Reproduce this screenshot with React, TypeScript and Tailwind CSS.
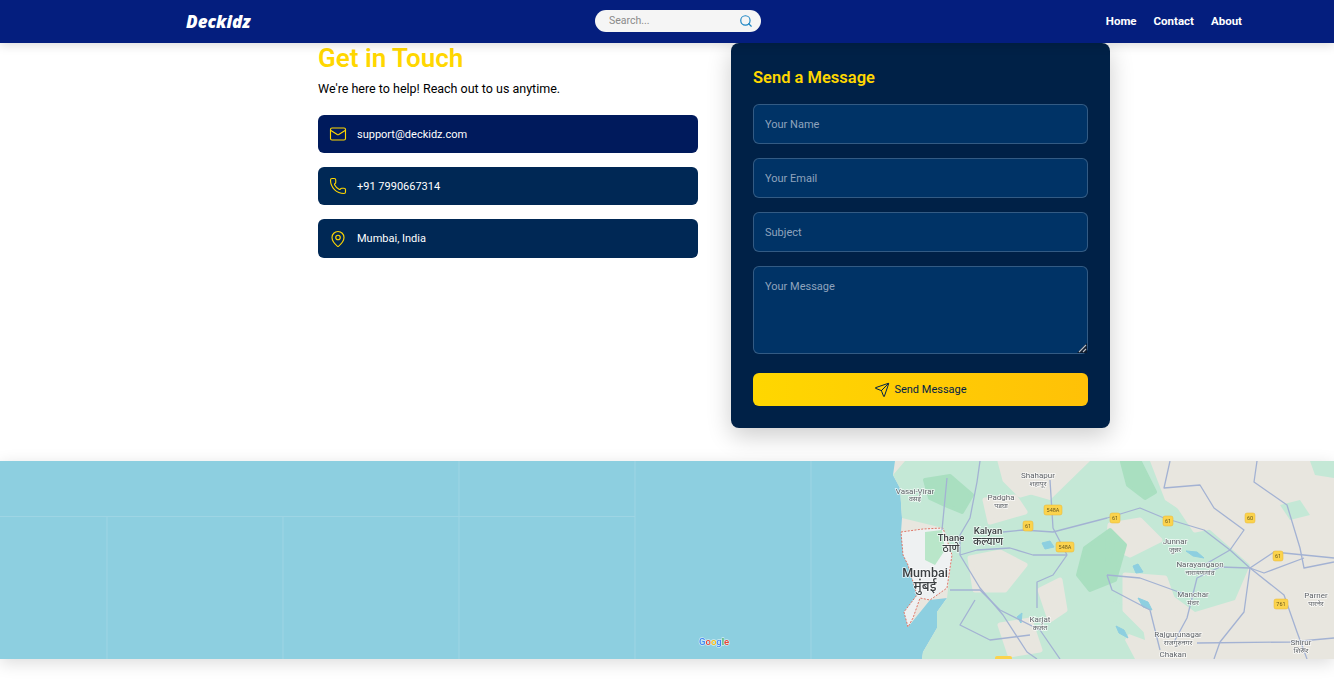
import React from "react";
import { Mail, MapPin, Phone, Search, Send } from "lucide-react";

const font = { fontFamily: 'Roboto, "Noto Sans", sans-serif' };

const gridLines = [107, 283, 459, 635, 811];

// the map is drawn in page coordinates, so the viewBox starts at y=461
const greens = [
  "893,475 905,461 1000,461 1015,490 1050,500 1090,461 1150,461 1165,500 1210,530 1250,565 1235,600 1195,612 1165,590 1150,600 1125,640 1135,659 922,659 923,652 937,628 937,612 947,598 952,555 943,528 902,518 900,488",
  "1280,505 1300,500 1310,515 1290,520",
  "1310,461 1334,461 1334,478 1315,475",
  "1110,600 1140,610 1145,640 1118,630",
];

const beiges = [
  "1000,461 1015,461 1060,461 1055,485 1020,495 1005,480",
  "985,500 1015,497 1025,512 990,522",
  "970,558 1000,552 1025,565 1005,590 975,590",
  "1040,590 1060,580 1065,610 1050,620",
  "1110,525 1140,520 1160,540 1130,555 1108,545",
  "1175,500 1205,500 1220,525 1195,530",
  "1000,625 1030,620 1040,650 1010,655",
  "1125,575 1165,578 1180,620 1155,640 1125,610",
];

const darkGreens = [
  "925,480 950,476 972,495 962,512 945,505 930,498",
  "1085,548 1110,530 1125,545 1115,580 1090,590 1078,575",
  "1122,462 1140,462 1155,492 1145,498 1128,485",
  "1107,535 1113,545 1108,565",
];

const lakes = [
  "1042,543 1050,541 1054,547 1045,549",
  "1186,551 1197,552 1204,558 1193,556",
  "1133,566 1138,564 1143,572 1136,573",
  "1138,598 1148,602 1152,610 1143,607",
  "1116,626 1124,630 1128,638 1119,633",
  "1017,617 1022,613 1021,623",
];

const roads = [
  "980,461 977,482 970,518 960,535 960,555 980,588 1003,615 1027,652 1037,659",
  "1003,532 1023,530 1053,532 1107,518 1140,508 1164,518 1204,530 1230,550 1250,568 1284,595 1297,632 1307,659",
  "960,555 977,550 1010,548 1033,555 1067,555",
  "1050,480 1053,528 1067,555 1053,575 1037,582 1037,608",
  "1257,461 1254,482 1287,505 1300,548 1304,568 1334,562",
  "1170,461 1164,488 1200,485 1214,508 1244,530 1230,550 1204,565",
  "1250,568 1274,552 1334,558",
  "1250,568 1264,573 1304,558",
  "1250,568 1220,567 1197,578 1187,618 1174,642",
  "1107,575 1140,578 1187,595",
  "1250,568 1244,612 1220,642 1214,659",
  "1197,643 1290,642 1334,638",
  "950,590 980,590 1000,610 1040,630 1060,659",
  "975,600 960,625 990,640 1030,635",
  "947,478 942,530",
  "1107,575 1112,590 1150,610 1160,650",
];

const shields = [
  { x: 1044, y: 505, w: 18, label: "548A" },
  { x: 1023, y: 521, w: 10, label: "61" },
  { x: 1056, y: 542, w: 18, label: "548A" },
  { x: 1110, y: 513, w: 10, label: "61" },
  { x: 1163, y: 516, w: 10, label: "61" },
  { x: 1245, y: 513, w: 10, label: "60" },
  { x: 1273, y: 551, w: 10, label: "61" },
  { x: 1274, y: 599, w: 14, label: "761" },
];

const labels = [
  { x: 915, y: 494, size: 8, text: "Vasai-Virar" },
  { x: 915, y: 501, size: 7, text: "वसई" },
  { x: 1038, y: 478, size: 8, text: "Shahapur" },
  { x: 1038, y: 486, size: 7, text: "शहापूर" },
  { x: 1001, y: 500, size: 8, text: "Padgha" },
  { x: 1001, y: 508, size: 7, text: "पडघा" },
  { x: 1040, y: 622, size: 8, text: "Karjat" },
  { x: 1040, y: 630, size: 7, text: "कर्जत" },
  { x: 1175, y: 544, size: 8, text: "Junnar" },
  { x: 1175, y: 552, size: 7, text: "जुन्नर" },
  { x: 1200, y: 567, size: 8, text: "Narayangaon" },
  { x: 1200, y: 575, size: 7, text: "नारायणगांव" },
  { x: 1193, y: 597, size: 8, text: "Manchar" },
  { x: 1193, y: 605, size: 7, text: "मंचर" },
  { x: 1178, y: 637, size: 8, text: "Rajgurunagar" },
  { x: 1178, y: 645, size: 7, text: "राजगुरुनगर" },
  { x: 1173, y: 657, size: 8, text: "Chakan" },
  { x: 1316, y: 598, size: 8, text: "Parner" },
  { x: 1316, y: 606, size: 7, text: "पारनेर" },
  { x: 1301, y: 645, size: 8, text: "Shirur" },
  { x: 1301, y: 653, size: 7, text: "शिरूर" },
  { x: 951, y: 541, size: 9.5, weight: 500, text: "Thane" },
  { x: 951, y: 552, size: 10.5, weight: 500, text: "ठाणे" },
  { x: 988, y: 534, size: 9.5, weight: 500, text: "Kalyan" },
  { x: 988, y: 545, size: 10.5, weight: 500, text: "कल्याण" },
  { x: 925, y: 577, size: 12.5, weight: 500, text: "Mumbai" },
  { x: 925, y: 591, size: 13.5, weight: 500, text: "मुंबई" },
];

function MapView() {
  return (
    <svg viewBox="0 461 1334 198" className="block h-[198px] w-full blur-[0.5px]">
      <rect x="0" y="461" width="1334" height="198" fill="#8dcfe0" />
      {gridLines.map((x) => (
        <line
          key={x}
          x1={x}
          x2={x}
          y1={x > 460 ? 461 : 516}
          y2="659"
          stroke="#9ed5e4"
          strokeWidth="1"
        />
      ))}
      <line x1="0" x2="635" y1="516.5" y2="516.5" stroke="#9ed5e4" />
      <line x1="459" x2="459" y1="461" y2="516" stroke="#9ed5e4" />

      <polygon
        points="895,461 1334,461 1334,659 922,659 923,652 937,628 937,612 947,598 930,600 908,627 904,612 917,595 908,565 901,532 902,518 900,488 893,475"
        fill="#e8e6df"
      />
      {greens.map((p) => (
        <polygon key={p} points={p} fill="#c4e8d6" />
      ))}
      {beiges.map((p) => (
        <polygon key={p} points={p} fill="#e8e6df" stroke="#e8e6df" strokeWidth="5" strokeLinejoin="round" />
      ))}
      {darkGreens.map((p) => (
        <polygon key={p} points={p} fill="#a9dfc0" stroke="#a9dfc0" strokeWidth="4" strokeLinejoin="round" />
      ))}
      {lakes.map((p) => (
        <polygon key={p} points={p} fill="#8dcfe0" stroke="#8dcfe0" strokeWidth="1" strokeLinejoin="round" />
      ))}
      <polygon
        points="901,532 923,529 943,528 952,555 947,588 930,600 920,598 913,618 908,627 904,612 917,595 908,565 903,555"
        fill="#eef1f2"
      />
      <polygon points="925,532 942,530 945,550 935,565 925,560" fill="#b9e6c9" />
      <polygon
        points="901,532 923,529 943,528 952,555 947,588 930,600 920,598 913,618 908,627 904,612 917,595 908,565 903,555"
        fill="none"
        stroke="#dc6a5a"
        strokeWidth="0.9"
        strokeDasharray="2 1.4"
      />
      {roads.map((p) => (
        <polyline key={p} points={p} fill="none" stroke="#a3b2d3" strokeWidth="1.3" strokeLinejoin="round" />
      ))}
      <rect x="995" y="656" width="17" height="8" rx="2" fill="#fbd34d" />
      {shields.map((s) => (
        <g key={s.x + s.label}>
          <rect x={s.x} y={s.y} width={s.w} height="10" rx="2" fill="#fbd34d" stroke="#eab730" strokeWidth="0.5" />
          <text
            x={s.x + s.w / 2}
            y={s.y + 7.3}
            textAnchor="middle"
            fontSize="5.5"
            fill="#6b5a1e"
            fontFamily="Roboto, sans-serif"
          >
            {s.label}
          </text>
        </g>
      ))}
      {labels.map((l) => (
        <text
          key={l.text}
          x={l.x}
          y={l.y}
          textAnchor="middle"
          fontSize={l.size}
          fontWeight={l.weight ?? 400}
          fill={l.weight ? "#3c4043" : "#5f6368"}
          stroke="#ffffff"
          strokeOpacity="0.75"
          strokeWidth="1.5"
          paintOrder="stroke"
          fontFamily='Roboto, "Noto Sans", sans-serif'
        >
          {l.text}
        </text>
      ))}
      <text x="699" y="645" fontSize="9.5" fontWeight="500" fontFamily="Roboto, sans-serif" stroke="#ffffff" strokeOpacity="0.6" strokeWidth="1.4" paintOrder="stroke">
        <tspan fill="#4285f4">G</tspan>
        <tspan fill="#ea4335">o</tspan>
        <tspan fill="#fbbc05">o</tspan>
        <tspan fill="#4285f4">g</tspan>
        <tspan fill="#34a853">l</tspan>
        <tspan fill="#ea4335">e</tspan>
      </text>
    </svg>
  );
}

function ContactCard({
  icon,
  text,
  active,
  tall,
}: {
  icon: React.ReactNode;
  text: string;
  active?: boolean;
  tall?: boolean;
}) {
  return (
    <div
      className={`flex items-center gap-[10px] rounded-md px-[11px] text-white ${tall ? "h-[39px]" : "h-[38px]"} ${
        active ? "bg-[#001a5c]" : "bg-[#002855]"
      }`}
    >
      <span className="text-[#ffd700]">{icon}</span>
      <span className="pt-[2px] text-[11px]">{text}</span>
    </div>
  );
}

const inputClass =
  "block w-full rounded-md border border-white/20 bg-[#003366] px-[11px] text-[11px] text-white outline-none placeholder:text-[#8fa3bd]";

export default function App() {
  return (
    <div className="min-h-[700px] bg-white" style={font}>
      <nav className="relative z-10 flex h-[43px] items-center bg-[#041e7e] pl-[186px] pr-[92px] shadow-[0_2px_10px_rgba(0,0,0,0.15)]">
        <div className="w-[409px] text-[17px] font-black italic text-white" style={{ fontFamily: '"Open Sans", sans-serif' }}>
          Deckidz
        </div>
        <div className="mb-[2px] flex h-[22px] w-[166px] items-center justify-between rounded-full bg-[#f5f5f5] pl-[14px] pr-[8px]">
          <input placeholder="Search..." className="w-[110px] bg-transparent text-[10.5px] outline-none placeholder:text-[#8a8a8a]" />
          <Search size={14} className="text-[#1b85c4]" />
        </div>
        <div className="ml-auto flex gap-[17px] text-[11.5px] font-bold text-white">
          <a>Home</a>
          <a>Contact</a>
          <a>About</a>
        </div>
      </nav>

      <main className="flex gap-[33px] pb-[33px] pl-[318px]">
        <section className="w-[380px]">
          <h1 className="text-[26px] font-semibold leading-[30px] text-[#ffd700]">Get in Touch</h1>
          <p className="mt-[7px] text-[12.5px] leading-[18px] text-black">We're here to help! Reach out to us anytime.</p>
          <div className="mt-[17px] flex flex-col gap-[14px]">
            <ContactCard active icon={<Mail size={18} strokeWidth={1.5} />} text="support@deckidz.com" />
            <ContactCard icon={<Phone size={18} strokeWidth={1.5} />} text="+91 7990667314" />
            <ContactCard tall icon={<MapPin size={18} strokeWidth={1.5} />} text="Mumbai, India" />
          </div>
        </section>

        <form className="relative h-[385px] w-[379px] rounded-lg bg-[#002147] px-[22px] pt-[23px] shadow-[0_8px_24px_rgba(0,0,0,0.2)]">
          <h2 className="text-[16.5px] font-semibold leading-[24px] text-[#ffd700]">Send a Message</h2>
          <div className="mt-[14px] flex flex-col gap-[14px]">
            <input placeholder="Your Name" className={`${inputClass} h-[40px]`} />
            <input placeholder="Your Email" className={`${inputClass} h-[40px]`} />
            <input placeholder="Subject" className={`${inputClass} h-[40px]`} />
            <div className="relative">
              <textarea placeholder="Your Message" className={`${inputClass} h-[88px] resize-none py-[12px]`} />
              {/* resize grip */}
              <svg viewBox="0 0 10 10" className="pointer-events-none absolute bottom-[1px] right-[1px] h-[10px] w-[10px]">
                <polygon points="10,0 10,10 0,10" fill="#0d1b2e" />
                <line x1="2" y1="9" x2="9" y2="2" stroke="#b8bec8" strokeWidth="1.1" />
                <line x1="6" y1="9" x2="9" y2="6" stroke="#b8bec8" strokeWidth="1.1" />
              </svg>
            </div>
          </div>
          <button
            type="button"
            className="mt-[19px] flex h-[33px] w-full items-center justify-center gap-[4px] rounded-md bg-gradient-to-r from-[#ffd700] to-[#ffc107] pt-[1px] text-[11px] text-[#002147]"
          >
            <Send size={16} strokeWidth={1.5} />
            Send Message
          </button>
        </form>
      </main>

      <div className="shadow-[0_4px_16px_rgba(0,0,0,0.14)]">
        <MapView />
      </div>
    </div>
  );
}
